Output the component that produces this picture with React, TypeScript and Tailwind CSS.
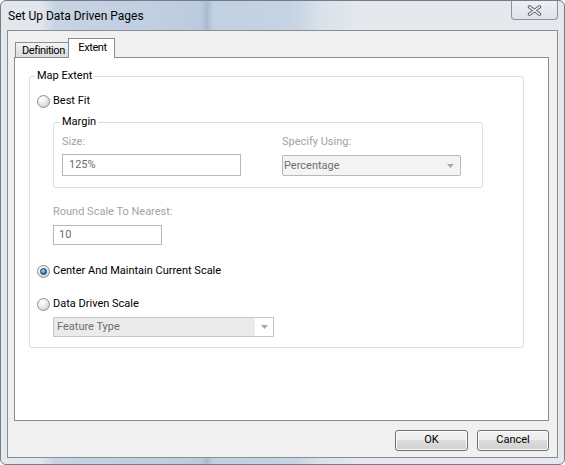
import React from "react";

function Radio({ checked }: { checked?: boolean }) {
  return (
    <span className="flex h-[13px] w-[13px] shrink-0 items-center justify-center rounded-full border border-[#8e8f8f] bg-[radial-gradient(circle_at_35%_30%,#ffffff_0%,#ededed_40%,#c2c2c2_100%)]">
      {checked && (
        <span className="h-[7px] w-[7px] rounded-full border border-[#17406c] bg-[radial-gradient(circle_at_40%_35%,#b9e7ff_0%,#3a95d6_45%,#0e4883_100%)]" />
      )}
    </span>
  );
}

function Arrow() {
  return (
    <svg width="7" height="4" viewBox="0 0 7 4" className="shrink-0">
      <path d="M0 0 L7 0 L3.5 4 Z" fill="#a9a9a9" />
    </svg>
  );
}

export default function App() {
  return (
    <div className="flex h-[465px] w-[565px] flex-col overflow-hidden rounded-[6px] border border-[#737c88] bg-[linear-gradient(90deg,#e3e8ed_0px,#e0e6ec_40px,#c6d3e3_55px,#c0cfe1_150px,#bbcadc_200px,#a9bcd2_206px,#c1d0e2_212px,#c5d3e3_290px,#d9e1ea_320px,#e5e9ee_360px,#e5e9ee_100%)] font-['Roboto',sans-serif] text-black">
      {/* title bar */}
      <div className="flex h-[29px] shrink-0">
        <div className="pl-[7px] pt-[7px] text-[12px] leading-[16px]">Set Up Data Driven Pages</div>
        <div className="-mt-px ml-auto mr-[6px] flex h-[20px] w-[47px] items-center justify-center rounded-b-[4px] border border-t-0 border-[#8b939e] bg-[linear-gradient(180deg,#eef1f4,#dde3e9)] pt-[1px]">
          <svg width="15" height="11" viewBox="0 0 15 11">
            <path d="M2.5 1.8 L12.5 9.2 M12.5 1.8 L2.5 9.2" stroke="#5b6470" strokeWidth="3.4" strokeLinecap="round" />
            <path d="M2.5 1.8 L12.5 9.2 M12.5 1.8 L2.5 9.2" stroke="#f1f3f6" strokeWidth="1.5" strokeLinecap="round" />
          </svg>
        </div>
      </div>

      {/* client area */}
      <div className="mx-[6px] flex h-[428px] shrink-0 flex-col border border-[#8b8f93] bg-[#f0f0f0] pl-[6px] pr-[8px] pt-[7px]">
        {/* tabs */}
        <div className="flex h-[19px] shrink-0 items-end pl-[1px] text-[11px] tracking-[-0.4px]">
          <div className="flex h-[15px] w-[54px] items-center border border-b-0 border-[#898c95] bg-[linear-gradient(180deg,#f3f3f3,#dadada)] pl-[6px] leading-[13px]">
            Definition
          </div>
          <div className="relative z-10 -mb-px -ml-px flex h-[20px] w-[47px] justify-center border border-b-0 border-[#898c95] bg-white pl-[2px] pt-[2px] leading-[13px]">
            Extent
          </div>
        </div>

        {/* panel */}
        <div className="h-[364px] shrink-0 border border-[#898c95] bg-white">
          <fieldset className="ml-[14px] mt-[10px] w-[495px] rounded-[3px] border border-[#d5dfe5] pb-[10px] text-[11px] leading-[16px]">
            <legend className="ml-[5px] px-[2px]">Map Extent</legend>

            <div className="ml-[7px] mt-[9px] flex h-[16px] items-center gap-[3px]">
              <Radio />
              <span>Best Fit</span>
            </div>

            <fieldset className="ml-[23px] mt-[5px] w-[430px] rounded-[3px] border border-[#d5dfe5] pb-[11px]">
              <legend className="ml-[6px] px-[2px]">Margin</legend>
              <div className="mt-[4px] flex gap-[41px] pl-[8px]">
                <div className="flex w-[179px] flex-col">
                  <span className="text-[#a3a3a3]">Size:</span>
                  <div className="mt-[4px] flex h-[22px] items-center border border-[#b5b9bd] bg-white pl-[6px] text-[#6d6d6d]">
                    125%
                  </div>
                </div>
                <div className="flex w-[179px] flex-col">
                  <span className="text-[#a3a3a3]">Specify Using:</span>
                  <div className="mt-[5px] flex h-[21px] items-center rounded-[2px] border border-[#b5b9bd] bg-[#f4f4f4] pl-[1px] pr-[6px] text-[#6d6d6d]">
                    <span className="flex-1">Percentage</span>
                    <Arrow />
                  </div>
                </div>
              </div>
            </fieldset>

            <div className="ml-[23px] mt-[16px] text-[#a3a3a3]">Round Scale To Nearest:</div>
            <div className="ml-[23px] mt-[5px] flex h-[20px] w-[109px] items-center border border-[#b5b9bd] bg-white pl-[5px] text-[#6d6d6d]">
              10
            </div>

            <div className="ml-[7px] mt-[18px] flex h-[16px] items-center gap-[3px]">
              <Radio checked />
              <span>Center And Maintain Current Scale</span>
            </div>

            <div className="ml-[7px] mt-[17px] flex h-[16px] items-center gap-[3px]">
              <Radio />
              <span>Data Driven Scale</span>
            </div>

            <div className="ml-[23px] mt-[5px] flex h-[20px] w-[221px] items-center border border-[#c5c5c5] bg-white pr-[5px] text-[#6d6d6d]">
              <div className="flex h-full w-[201px] items-center bg-[#ebebeb] pl-[3px]">Feature Type</div>
              <div className="flex flex-1 justify-end">
                <Arrow />
              </div>
            </div>
          </fieldset>
        </div>

        {/* buttons */}
        <div className="mt-[9px] flex shrink-0 justify-end gap-[9px] text-[11px]">
          <button className="h-[21px] w-[73px] rounded-[3px] border border-[#707070] bg-[linear-gradient(180deg,#f2f2f2_0%,#ebebeb_50%,#dddddd_50%,#cfcfcf_100%)] shadow-[inset_0_0_0_1px_#fbfbfb]">
            OK
          </button>
          <button className="h-[21px] w-[72px] rounded-[3px] border border-[#707070] bg-[linear-gradient(180deg,#f2f2f2_0%,#ebebeb_50%,#dddddd_50%,#cfcfcf_100%)] shadow-[inset_0_0_0_1px_#fbfbfb]">
            Cancel
          </button>
        </div>
      </div>
    </div>
  );
}
